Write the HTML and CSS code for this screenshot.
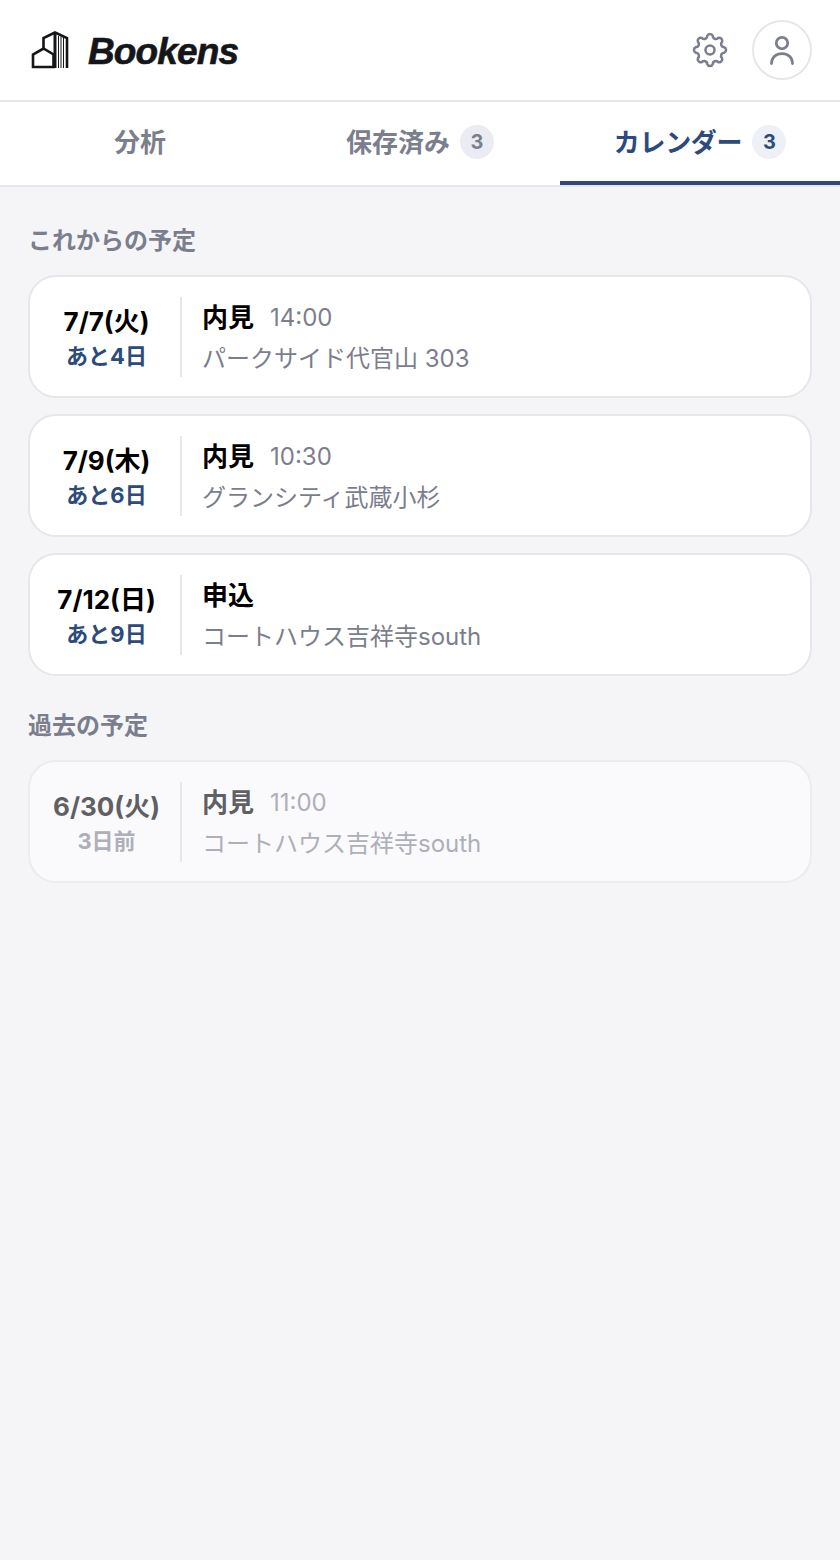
FILE: index.html
```html
<!DOCTYPE html>
<html lang="ja">
<head>
    <meta charset="UTF-8">
    <meta name="viewport" content="width=device-width, initial-scale=1.0">
    <title>Bookens カレンダー</title>
    <link rel="stylesheet" href="styles.css">
</head>
<body>
    <!-- ヘッダー -->
    <header class="header">
        <div class="brand">
            <svg class="brand-icon" viewBox="0 0 40 40" fill="none" stroke="#15161a" stroke-width="2.6">
                <path d="M3 37V24.500L13.500 18.500L23.500 24.500V37Z"/>
                <path d="M13.500 18.500V8L25 2.500L37 8V38"/>
                <path d="M25 2.500V38" stroke-width="3"/>
                <path d="M28.500 6V38M31 6.500V38M33.500 7V38" stroke-width="1"/>
            </svg>
            <span class="brand-name">Bookens</span>
        </div>
        <div class="header-right">
            <svg class="gear" viewBox="0 0 24 24" fill="none" stroke="#7b7e8c" stroke-width="1.7" stroke-linejoin="round">
                <path d="M10.130 2.580A2 2 0 0 1 13.870 2.580A2 2 0 0 0 17.330 4.020A2 2 0 0 1 19.980 6.670A2 2 0 0 0 21.420 10.130A2 2 0 0 1 21.420 13.870A2 2 0 0 0 19.980 17.330A2 2 0 0 1 17.330 19.980A2 2 0 0 0 13.870 21.420A2 2 0 0 1 10.130 21.420A2 2 0 0 0 6.670 19.980A2 2 0 0 1 4.020 17.330A2 2 0 0 0 2.580 13.870A2 2 0 0 1 2.580 10.130A2 2 0 0 0 4.020 6.670A2 2 0 0 1 6.670 4.020A2 2 0 0 0 10.130 2.580Z"/>
                <circle cx="12" cy="12" r="3"/>
            </svg>
            <div class="avatar">
                <svg class="avatar-icon" viewBox="0 0 24 24" fill="none" stroke="#7b7e8c" stroke-width="2.200" stroke-linecap="round">
                    <circle cx="12" cy="6.400" r="4.600"/>
                    <path d="M3.600 22.800c0-4.800 3.600-8 8.400-8s8.400 3.200 8.400 8"/>
                </svg>
            </div>
        </div>
    </header>

    <!-- タブ -->
    <nav class="tabs">
        <div class="tab">分析</div>
        <div class="tab">保存済み<span class="count">3</span></div>
        <div class="tab active">カレンダー<span class="count">3</span></div>
    </nav>

    <main class="content">
        <h2 class="section-title">これからの予定</h2>
        <div class="card-list">
            <div class="card">
                <div class="date">
                    <div class="day">7/7(火)</div>
                    <div class="left">あと4日</div>
                </div>
                <div class="detail">
                    <div class="event"><span class="kind">内見</span><span class="time">14:00</span></div>
                    <div class="place">パークサイド代官山 303</div>
                </div>
            </div>
            <div class="card">
                <div class="date">
                    <div class="day">7/9(木)</div>
                    <div class="left">あと6日</div>
                </div>
                <div class="detail">
                    <div class="event"><span class="kind">内見</span><span class="time">10:30</span></div>
                    <div class="place">グランシティ武蔵小杉</div>
                </div>
            </div>
            <div class="card">
                <div class="date">
                    <div class="day">7/12(日)</div>
                    <div class="left">あと9日</div>
                </div>
                <div class="detail">
                    <div class="event"><span class="kind">申込</span></div>
                    <div class="place">コートハウス吉祥寺south</div>
                </div>
            </div>
        </div>

        <h2 class="section-title past-title">過去の予定</h2>
        <div class="card-list">
            <div class="card past">
                <div class="date">
                    <div class="day">6/30(火)</div>
                    <div class="left">3日前</div>
                </div>
                <div class="detail">
                    <div class="event"><span class="kind">内見</span><span class="time">11:00</span></div>
                    <div class="place">コートハウス吉祥寺south</div>
                </div>
            </div>
        </div>
    </main>
</body>
</html>
```

FILE: styles.css
```css
*{
    padding: 0;
    margin: 0;
    box-sizing: border-box;
}
body{
    min-height: 1560px;
    background-color: #f5f5f8;
    font-family: Inter, "Noto Sans CJK JP", sans-serif;
}
.header{
    height: 102px;
    padding: 0 28px 0 30px;
    display: flex;
    justify-content: space-between;
    align-items: center;
    background-color: #fff;
    border-bottom: 2px solid #e6e6eb;
}
.brand{
    display: flex;
    align-items: center;
    gap: 18px;
}
.brand-icon{
    width: 40px;
    height: 40px;
}
.brand-name{
    font-family: "Liberation Sans", sans-serif;
    font-size: 37px;
    font-weight: 700;
    font-style: italic;
    letter-spacing: -0.85px;
    margin-top: 4px;
    color: #15161a;
    -webkit-text-stroke: 0.6px #15161a;
}
.header-right{
    display: flex;
    align-items: center;
    gap: 24px;
}
.gear{
    width: 36px;
    height: 36px;
}
.avatar{
    width: 60px;
    height: 60px;
    border: 2px solid #e6e6eb;
    border-radius: 50%;
    display: flex;
    justify-content: center;
    align-items: center;
}
.avatar-icon{
    width: 30px;
    height: 30px;
}
.tabs{
    height: 85px;
    display: flex;
    background-color: #fff;
    border-bottom: 2px solid #e6e6eb;
}
.tab{
    flex: 1;
    height: 83px;
    padding-bottom: 7px;
    display: flex;
    justify-content: center;
    align-items: center;
    gap: 10px;
    font-size: 26px;
    font-weight: 700;
    color: #7b7e8c;
}
.tab.active{
    color: #2c4a7c;
    border-bottom: 4px solid #2c4a7c;
    padding-top: 4px;
    letter-spacing: -0.3px;
}
.count{
    width: 34px;
    height: 34px;
    margin-top: 3px;
    border-radius: 50%;
    background-color: #ebecf3;
    display: flex;
    justify-content: center;
    align-items: center;
    font-size: 20px;
    font-weight: 700;
}
.active .count{
    background-color: #eef0f7;
}
.content{
    padding: 37px 28px 0;
}
.section-title{
    font-size: 24px;
    font-weight: 700;
    line-height: 34px;
    color: #7b7e8c;
    margin-bottom: 17px;
}
.past-title{
    margin-top: 33px;
}
.card-list{
    display: flex;
    flex-direction: column;
    gap: 16px;
}
.card{
    height: 123px;
    display: flex;
    align-items: center;
    padding: 0 20px 0 0;
    background-color: #fff;
    border: 2px solid #e6e6eb;
    border-radius: 28px;
}
.date{
    width: 152px;
    height: 80px;
    flex-shrink: 0;
    padding-left: 3px;
    display: flex;
    flex-direction: column;
    justify-content: center;
    align-items: center;
    border-right: 2px solid #e6e6eb;
}
.day{
    font-size: 26px;
    font-weight: 700;
    line-height: 38px;
    color: #000;
}
.left{
    font-size: 22px;
    font-weight: 700;
    line-height: 30px;
    color: #2c4a7c;
}
.detail{
    padding: 1px 0 0 20px;
    display: flex;
    flex-direction: column;
    gap: 5px;
}
.event{
    display: flex;
    align-items: center;
    gap: 16px;
    height: 38px;
}
.kind{
    font-size: 26px;
    font-weight: 700;
    margin-top: -2px;
    color: #000;
}
.time{
    font-size: 24px;
    margin-top: 2px;
    color: #7b7e8c;
}
.place{
    font-size: 24px;
    line-height: 36px;
    color: #7b7e8c;
}
.card.past{
    background-color: #fafafc;
    border-color: #ececf0;
}
.past .day,.past .kind{
    color: #5f5f64;
}
.past .left,.past .time,.past .place{
    color: #aeafb8;
}
```
